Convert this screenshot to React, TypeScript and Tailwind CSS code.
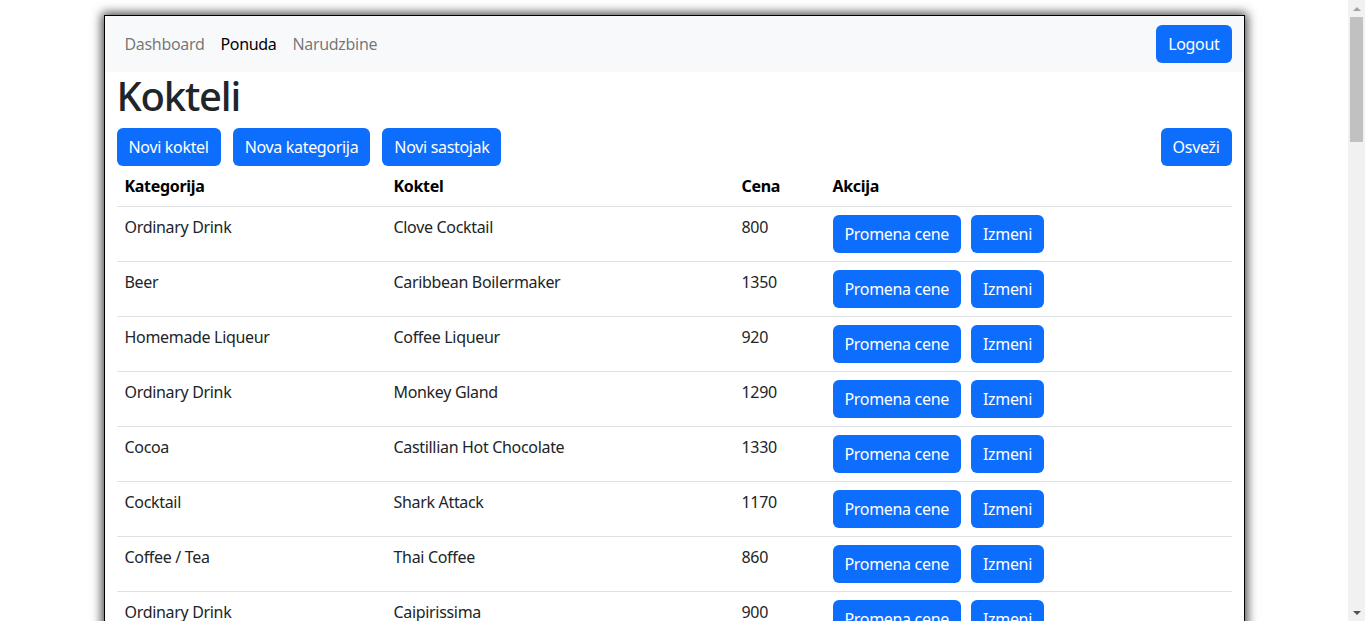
import React from "react";

type Row = {
  kategorija: string;
  koktel: string;
  cena: number;
};

const rows: Row[] = [
  { kategorija: "Ordinary Drink", koktel: "Clove Cocktail", cena: 800 },
  { kategorija: "Beer", koktel: "Caribbean Boilermaker", cena: 1350 },
  { kategorija: "Homemade Liqueur", koktel: "Coffee Liqueur", cena: 920 },
  { kategorija: "Ordinary Drink", koktel: "Monkey Gland", cena: 1290 },
  { kategorija: "Cocoa", koktel: "Castillian Hot Chocolate", cena: 1330 },
  { kategorija: "Cocktail", koktel: "Shark Attack", cena: 1170 },
  { kategorija: "Coffee / Tea", koktel: "Thai Coffee", cena: 860 },
  { kategorija: "Ordinary Drink", koktel: "Caipirissima", cena: 900 },
];

const Btn = ({ children, className = "" }: { children: React.ReactNode; className?: string }) => (
  <button
    className={
      "h-[38px] px-3 rounded-md bg-[#0d6efd] text-white text-[16px] leading-6 whitespace-nowrap " +
      className
    }
  >
    {children}
  </button>
);

const Scrollbar = () => (
  <div className="w-[17px] h-full bg-[#f1f1f1] flex flex-col items-center shrink-0">
    <div className="h-[17px] w-full flex items-center justify-center">
      <div className="w-0 h-0 border-l-[4px] border-r-[4px] border-b-[4px] border-l-transparent border-r-transparent border-b-[#a3a3a3]" />
    </div>
    <div className="w-[13px] h-[125px] bg-[#c1c1c1]" />
    <div className="flex-1" />
    <div className="h-[17px] w-full flex items-center justify-center">
      <div className="w-0 h-0 border-l-[4px] border-r-[4px] border-t-[4px] border-l-transparent border-r-transparent border-t-[#505050]" />
    </div>
  </div>
);

const App = () => {
  return (
    <div
      className="w-[1365px] h-[621px] flex overflow-hidden bg-white text-[#212529] tracking-[-0.02em]"
      style={{ fontFamily: '"Noto Sans", "Open Sans", sans-serif' }}
    >
      <div className="flex-1 overflow-hidden pt-[15px]">
        <div className="mx-auto w-[1141px] border border-black bg-white shadow-[0_0_10px_2px_rgba(0,0,0,0.75)]">
          <nav className="bg-[#f8f9fa] px-3 py-2 flex items-center justify-between">
            <div className="flex text-[16px] leading-6">
              <a className="px-2 py-2 text-black/55">Dashboard</a>
              <a className="px-2 py-2 text-black">Ponuda</a>
              <a className="px-2 py-2 text-black/55">Narudzbine</a>
            </div>
            <Btn>Logout</Btn>
          </nav>

          <div className="px-3 pb-6">
            <h1 className="text-[40px] leading-[1.2] font-medium mb-2 tracking-[-0.03em]">Kokteli</h1>

            <div className="flex gap-3">
              <Btn>Novi koktel</Btn>
              <Btn>Nova kategorija</Btn>
              <Btn>Novi sastojak</Btn>
              <Btn className="ml-auto">Osveži</Btn>
            </div>

            <table className="w-full text-[16px] leading-6 border-collapse">
              <thead>
                <tr className="border-b border-[#dee2e6] text-left text-black">
                  <th className="p-2 font-bold w-[269px]">Kategorija</th>
                  <th className="p-2 font-bold w-[348px]">Koktel</th>
                  <th className="p-2 font-bold w-[91px]">Cena</th>
                  <th className="p-2 font-bold">Akcija</th>
                </tr>
              </thead>
              <tbody>
                {rows.map((r, i) => (
                  <tr key={i} className="border-b border-[#dee2e6] align-top">
                    <td className="p-2">{r.kategorija}</td>
                    <td className="p-2">{r.koktel}</td>
                    <td className="p-2">{r.cena}</td>
                    <td className="p-2">
                      <div className="flex gap-[10px]">
                        <Btn>Promena cene</Btn>
                        <Btn>Izmeni</Btn>
                      </div>
                    </td>
                  </tr>
                ))}
              </tbody>
            </table>
          </div>
        </div>
      </div>
      <Scrollbar />
    </div>
  );
};

export default App;
